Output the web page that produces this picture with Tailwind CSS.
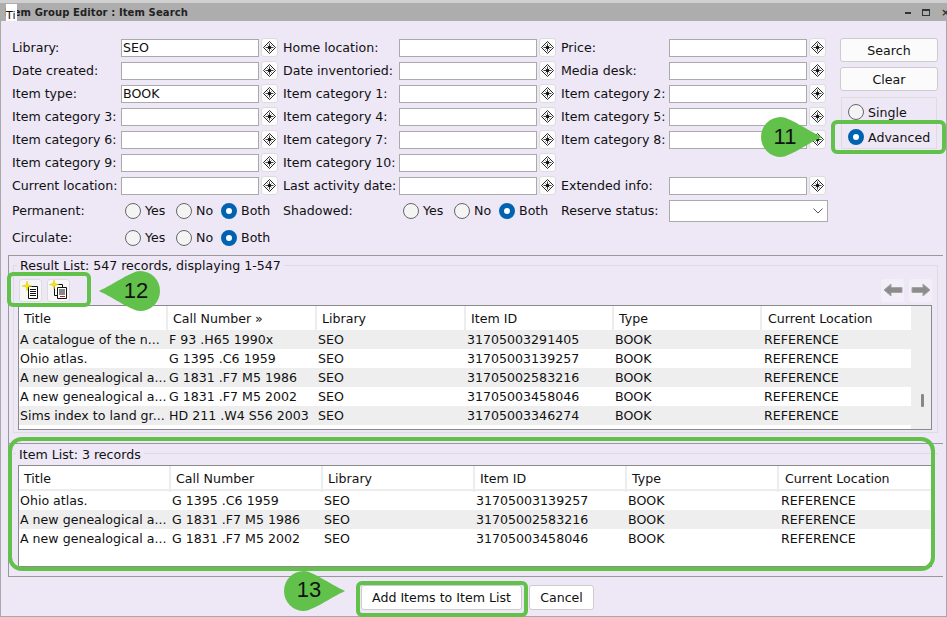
<!DOCTYPE html>
<html lang="en">
<head>
    <meta charset="UTF-8">
    <title>Item Group Editor : Item Search</title>
    <script src="https://cdn.jsdelivr.net/npm/@tailwindcss/browser@4"></script>
</head>
<body class="w-[947px] h-[617px] overflow-hidden relative bg-[#ede7f6] text-[12.6px] leading-[17px] whitespace-nowrap text-[#111] font-['DejaVu_Sans',sans-serif]">
    <svg class="hidden">
        <symbol id="diamond" viewBox="0 0 13 13">
            <path d="M6.5 .5L12.5 6.5L6.5 12.5L.5 6.5Z" fill="none" stroke="#111" stroke-width=".9"/>
            <path d="M6.5 2.5V10.5M2.5 6.5H10.5M4.5 4.5L8.5 8.5M8.5 4.5L4.5 8.5" stroke="#111" stroke-width=".8"/>
            <circle cx="6.5" cy="6.5" r="1.5" fill="#111"/>
        </symbol>
    </svg>

    <!-- Title bar -->
    <div class="h-[3px] bg-[#d0d0d0]"></div>
    <header class="h-[18px] bg-[#adadad] flex items-center justify-between pl-[5px] text-[10px] font-bold text-[#222]">
        <span class="tracking-[.1px]">Item Group Editor : Item Search</span>
        <div class="flex items-center gap-[11px]">
            <span class="w-[6px] h-[2px] bg-[#333] mt-[2px]"></span>
            <span class="w-[8px] h-[7px] border border-[#333] border-t-2"></span>
            <span class="w-[6px] overflow-hidden text-[#333] text-[11px] leading-none">×</span>
        </div>
    </header>
    <div class="absolute left-[6px] top-[4px] w-[11px] h-[17px] bg-white text-[11px] leading-[24px] overflow-hidden">Ti</div>

    <main class="h-[596px] border-x border-b border-[#a8a8a8] relative">
        <!-- Search form -->
        <section class="flex pt-[15px] pl-[11px]">
            <div>
                <div class="grid grid-cols-[109px_138px_24px_116px_138px_24px_108px_138px_18px] auto-rows-[23px] items-center">
                    <label>Library:</label><input value="SEO" class="h-[18px] w-full bg-white border border-[#aaa] px-[1px] outline-none"><button class="w-[17px] h-[19px] ml-[2px] bg-[#fbfbfb] border border-[#ddd] rounded-[3px] flex items-center justify-center"><svg class="w-[13px] h-[13px]"><use href="#diamond"></use></svg></button>
                    <label>Home location:</label><input class="h-[18px] w-full bg-white border border-[#aaa]"><button class="w-[17px] h-[19px] ml-[2px] bg-[#fbfbfb] border border-[#ddd] rounded-[3px] flex items-center justify-center"><svg class="w-[13px] h-[13px]"><use href="#diamond"></use></svg></button>
                    <label>Price:</label><input class="h-[18px] w-full bg-white border border-[#aaa]"><button class="w-[17px] h-[19px] ml-[2px] bg-[#fbfbfb] border border-[#ddd] rounded-[3px] flex items-center justify-center"><svg class="w-[13px] h-[13px]"><use href="#diamond"></use></svg></button>

                    <label>Date created:</label><input class="h-[18px] w-full bg-white border border-[#aaa]"><button class="w-[17px] h-[19px] ml-[2px] bg-[#fbfbfb] border border-[#ddd] rounded-[3px] flex items-center justify-center"><svg class="w-[13px] h-[13px]"><use href="#diamond"></use></svg></button>
                    <label>Date inventoried:</label><input class="h-[18px] w-full bg-white border border-[#aaa]"><button class="w-[17px] h-[19px] ml-[2px] bg-[#fbfbfb] border border-[#ddd] rounded-[3px] flex items-center justify-center"><svg class="w-[13px] h-[13px]"><use href="#diamond"></use></svg></button>
                    <label>Media desk:</label><input class="h-[18px] w-full bg-white border border-[#aaa]"><button class="w-[17px] h-[19px] ml-[2px] bg-[#fbfbfb] border border-[#ddd] rounded-[3px] flex items-center justify-center"><svg class="w-[13px] h-[13px]"><use href="#diamond"></use></svg></button>

                    <label>Item type:</label><input value="BOOK" class="h-[18px] w-full bg-white border border-[#aaa] px-[1px] outline-none"><button class="w-[17px] h-[19px] ml-[2px] bg-[#fbfbfb] border border-[#ddd] rounded-[3px] flex items-center justify-center"><svg class="w-[13px] h-[13px]"><use href="#diamond"></use></svg></button>
                    <label>Item category 1:</label><input class="h-[18px] w-full bg-white border border-[#aaa]"><button class="w-[17px] h-[19px] ml-[2px] bg-[#fbfbfb] border border-[#ddd] rounded-[3px] flex items-center justify-center"><svg class="w-[13px] h-[13px]"><use href="#diamond"></use></svg></button>
                    <label>Item category 2:</label><input class="h-[18px] w-full bg-white border border-[#aaa]"><button class="w-[17px] h-[19px] ml-[2px] bg-[#fbfbfb] border border-[#ddd] rounded-[3px] flex items-center justify-center"><svg class="w-[13px] h-[13px]"><use href="#diamond"></use></svg></button>

                    <label>Item category 3:</label><input class="h-[18px] w-full bg-white border border-[#aaa]"><button class="w-[17px] h-[19px] ml-[2px] bg-[#fbfbfb] border border-[#ddd] rounded-[3px] flex items-center justify-center"><svg class="w-[13px] h-[13px]"><use href="#diamond"></use></svg></button>
                    <label>Item category 4:</label><input class="h-[18px] w-full bg-white border border-[#aaa]"><button class="w-[17px] h-[19px] ml-[2px] bg-[#fbfbfb] border border-[#ddd] rounded-[3px] flex items-center justify-center"><svg class="w-[13px] h-[13px]"><use href="#diamond"></use></svg></button>
                    <label>Item category 5:</label><input class="h-[18px] w-full bg-white border border-[#aaa]"><button class="w-[17px] h-[19px] ml-[2px] bg-[#fbfbfb] border border-[#ddd] rounded-[3px] flex items-center justify-center"><svg class="w-[13px] h-[13px]"><use href="#diamond"></use></svg></button>

                    <label>Item category 6:</label><input class="h-[18px] w-full bg-white border border-[#aaa]"><button class="w-[17px] h-[19px] ml-[2px] bg-[#fbfbfb] border border-[#ddd] rounded-[3px] flex items-center justify-center"><svg class="w-[13px] h-[13px]"><use href="#diamond"></use></svg></button>
                    <label>Item category 7:</label><input class="h-[18px] w-full bg-white border border-[#aaa]"><button class="w-[17px] h-[19px] ml-[2px] bg-[#fbfbfb] border border-[#ddd] rounded-[3px] flex items-center justify-center"><svg class="w-[13px] h-[13px]"><use href="#diamond"></use></svg></button>
                    <label>Item category 8:</label><input class="h-[18px] w-full bg-white border border-[#aaa]"><button class="w-[17px] h-[19px] ml-[2px] bg-[#fbfbfb] border border-[#ddd] rounded-[3px] flex items-center justify-center"><svg class="w-[13px] h-[13px]"><use href="#diamond"></use></svg></button>

                    <label>Item category 9:</label><input class="h-[18px] w-full bg-white border border-[#aaa]"><button class="w-[17px] h-[19px] ml-[2px] bg-[#fbfbfb] border border-[#ddd] rounded-[3px] flex items-center justify-center"><svg class="w-[13px] h-[13px]"><use href="#diamond"></use></svg></button>
                    <label>Item category 10:</label><input class="h-[18px] w-full bg-white border border-[#aaa]"><button class="w-[17px] h-[19px] ml-[2px] bg-[#fbfbfb] border border-[#ddd] rounded-[3px] flex items-center justify-center"><svg class="w-[13px] h-[13px]"><use href="#diamond"></use></svg></button>
                    <span></span><span></span><span></span>

                    <label>Current location:</label><input class="h-[18px] w-full bg-white border border-[#aaa]"><button class="w-[17px] h-[19px] ml-[2px] bg-[#fbfbfb] border border-[#ddd] rounded-[3px] flex items-center justify-center"><svg class="w-[13px] h-[13px]"><use href="#diamond"></use></svg></button>
                    <label>Last activity date:</label><input class="h-[18px] w-full bg-white border border-[#aaa]"><button class="w-[17px] h-[19px] ml-[2px] bg-[#fbfbfb] border border-[#ddd] rounded-[3px] flex items-center justify-center"><svg class="w-[13px] h-[13px]"><use href="#diamond"></use></svg></button>
                    <label>Extended info:</label><input class="h-[18px] w-full bg-white border border-[#aaa]"><button class="w-[17px] h-[19px] ml-[2px] bg-[#fbfbfb] border border-[#ddd] rounded-[3px] flex items-center justify-center"><svg class="w-[13px] h-[13px]"><use href="#diamond"></use></svg></button>
                </div>

                <div class="flex items-center h-[27px]">
                    <span class="w-[113px]">Permanent:</span>
                    <span class="w-[51px] flex items-center gap-[4px]"><i class="w-4 h-4 rounded-full border border-[#666] bg-[#f4f4f4]"></i>Yes</span>
                    <span class="w-[45px] flex items-center gap-[4px]"><i class="w-4 h-4 rounded-full border border-[#666] bg-[#f4f4f4]"></i>No</span>
                    <span class="w-[62px] flex items-center gap-[4px]"><i class="w-4 h-4 rounded-full border-[5px] border-[#0063b1] bg-white"></i>Both</span>
                    <span class="w-[120px]">Shadowed:</span>
                    <span class="w-[51px] flex items-center gap-[4px]"><i class="w-4 h-4 rounded-full border border-[#666] bg-[#f4f4f4]"></i>Yes</span>
                    <span class="w-[45px] flex items-center gap-[4px]"><i class="w-4 h-4 rounded-full border border-[#666] bg-[#f4f4f4]"></i>No</span>
                    <span class="w-[62px] flex items-center gap-[4px]"><i class="w-4 h-4 rounded-full border-[5px] border-[#0063b1] bg-white"></i>Both</span>
                    <span class="w-[108px]">Reserve status:</span>
                    <div class="w-[159px] h-[22px] bg-white border border-[#aaa] flex items-center justify-end pr-[2px]">
                        <svg class="w-[14px] h-[14px] text-[#555]" viewBox="0 0 14 14" fill="none" stroke="currentColor"><path d="M2.5 4.5L7 9L11.5 4.5"/></svg>
                    </div>
                </div>
                <div class="flex items-center h-[27px]">
                    <span class="w-[113px]">Circulate:</span>
                    <span class="w-[51px] flex items-center gap-[4px]"><i class="w-4 h-4 rounded-full border border-[#666] bg-[#f4f4f4]"></i>Yes</span>
                    <span class="w-[45px] flex items-center gap-[4px]"><i class="w-4 h-4 rounded-full border border-[#666] bg-[#f4f4f4]"></i>No</span>
                    <span class="w-[62px] flex items-center gap-[4px]"><i class="w-4 h-4 rounded-full border-[5px] border-[#0063b1] bg-white"></i>Both</span>
                </div>
            </div>

            <!-- Search buttons and mode -->
            <aside class="w-[98px] ml-[12px] pt-[2px] flex flex-col">
                <button class="w-full h-[24px] bg-[#fbfbfb] border border-[#ccc] rounded-[3px]">Search</button>
                <button class="w-full h-[24px] mt-[5px] bg-[#fbfbfb] border border-[#ccc] rounded-[3px]">Clear</button>
                <div class="mt-[6px] h-[52px] mx-[1px] border border-[#ddd] pl-[6px] pt-[5px]">
                    <div class="flex items-center gap-[4px] h-[18px]"><i class="w-4 h-4 rounded-full border border-[#666] bg-[#f4f4f4]"></i>Single</div>
                    <div class="flex items-center gap-[4px] h-[18px] mt-[7px]"><i class="w-4 h-4 rounded-full border-[5px] border-[#0063b1] bg-white"></i>Advanced</div>
                </div>
            </aside>
        </section>

        <!-- Result list -->
        <section class="ml-[7px] mt-[4px] mr-[3px] h-[188px] border-t border-l border-[#999] pl-[4px] pr-[5px] pt-[9px]">
            <div class="border border-[#ddd] h-[168px] pl-[4px] pr-[5px] relative">
                <span class="absolute left-[3px] top-[-9px] bg-[#ede7f6] px-[3px]">Result List: 547 records, displaying 1-547</span>
                <div class="h-[39px] flex items-center justify-between pt-[9px]">
                    <div class="flex gap-[5px] pl-[1px]">
                        <button class="w-[23px] h-[23px] bg-[#f7f7f7] border border-[#ddd] rounded-[3px] flex items-center justify-center">
                            <svg class="w-[20px] h-[20px]" viewBox="0 0 20 20"><path d="M7.5 6.5H16.5V18.5H7.5Z" fill="#fff" stroke="#111"/><path d="M9 9.5H15M9 11.5H15M9 13.5H15M9 15.5H15" stroke="#111"/><path d="M6 1L7 5L11 6L7 7L6 11L5 7L1 6L5 5Z" fill="#f4e514" stroke="#d8c800" stroke-width=".5"/></svg>
                        </button>
                        <button class="w-[23px] h-[23px] bg-[#f7f7f7] border border-[#ddd] rounded-[3px] flex items-center justify-center">
                            <svg class="w-[20px] h-[20px]" viewBox="0 0 20 20"><path d="M5.5 4.5H13.5V15.5H5.5Z" fill="#fff" stroke="#111"/><path d="M8.5 7.5H17.5V18.5H8.5Z" fill="#fff" stroke="#111"/><path d="M10 10H16M10 12H16M10 14H16" stroke="#111"/><path d="M11 16.5H16" stroke="#c02020"/><path d="M5 0L6 3.5L9.5 4.5L6 5.5L5 9L4 5.5L.5 4.5L4 3.5Z" fill="#f4e514" stroke="#d8c800" stroke-width=".5"/></svg>
                        </button>
                    </div>
                    <div class="flex gap-[5px]">
                        <button class="w-[23px] h-[23px] bg-[#f3eff8] rounded-[3px] flex items-center justify-center">
                            <svg class="w-[20px] h-[14px]" viewBox="0 0 20 14"><path d="M1 7L8 1V4.5H19V9.5H8V13Z" fill="#8c8c8c" stroke="#a5a5a5"/></svg>
                        </button>
                        <button class="w-[23px] h-[23px] bg-[#f3eff8] rounded-[3px] flex items-center justify-center">
                            <svg class="w-[20px] h-[14px]" viewBox="0 0 20 14"><path d="M19 7L12 1V4.5H1V9.5H12V13Z" fill="#8c8c8c" stroke="#a5a5a5"/></svg>
                        </button>
                    </div>
                </div>
                <div class="h-[125px] border border-[#8a8a8a] flex bg-white overflow-hidden">
                    <div class="w-[892px]">
                        <div class="h-[24px] grid grid-cols-[149px_149px_149px_148px_148px_149px] items-center">
                            <span class="pl-[5px] border-r-2 border-[#ededed] h-full leading-[25px]">Title</span>
                            <span class="pl-[5px] border-r-2 border-[#ededed] h-full leading-[25px]">Call Number »</span>
                            <span class="pl-[5px] border-r-2 border-[#ededed] h-full leading-[25px]">Library</span>
                            <span class="pl-[5px] border-r-2 border-[#ededed] h-full leading-[25px]">Item ID</span>
                            <span class="pl-[5px] border-r-2 border-[#ededed] h-full leading-[25px]">Type</span>
                            <span class="pl-[6px] h-full leading-[25px]">Current Location</span>
                        </div>
                        <div class="h-[19px] leading-[19px] grid grid-cols-[149px_149px_149px_148px_148px_149px] bg-[#eee]"><span class="pl-[1px]">A catalogue of the n...</span><span class="pl-[1px]">F 93 .H65 1990x</span><span class="pl-[1px]">SEO</span><span class="pl-[1px]">31705003291405</span><span class="pl-[1px]">BOOK</span><span class="pl-[2px]">REFERENCE</span></div>
                        <div class="h-[19px] leading-[19px] grid grid-cols-[149px_149px_149px_148px_148px_149px]"><span class="pl-[1px]">Ohio atlas.</span><span class="pl-[1px]">G 1395 .C6 1959</span><span class="pl-[1px]">SEO</span><span class="pl-[1px]">31705003139257</span><span class="pl-[1px]">BOOK</span><span class="pl-[2px]">REFERENCE</span></div>
                        <div class="h-[19px] leading-[19px] grid grid-cols-[149px_149px_149px_148px_148px_149px] bg-[#eee]"><span class="pl-[1px]">A new genealogical a...</span><span class="pl-[1px]">G 1831 .F7 M5 1986</span><span class="pl-[1px]">SEO</span><span class="pl-[1px]">31705002583216</span><span class="pl-[1px]">BOOK</span><span class="pl-[2px]">REFERENCE</span></div>
                        <div class="h-[19px] leading-[19px] grid grid-cols-[149px_149px_149px_148px_148px_149px]"><span class="pl-[1px]">A new genealogical a...</span><span class="pl-[1px]">G 1831 .F7 M5 2002</span><span class="pl-[1px]">SEO</span><span class="pl-[1px]">31705003458046</span><span class="pl-[1px]">BOOK</span><span class="pl-[2px]">REFERENCE</span></div>
                        <div class="h-[19px] leading-[19px] grid grid-cols-[149px_149px_149px_148px_148px_149px] bg-[#eee]"><span class="pl-[1px]">Sims index to land gr...</span><span class="pl-[1px]">HD 211 .W4 S56 2003</span><span class="pl-[1px]">SEO</span><span class="pl-[1px]">31705003346274</span><span class="pl-[1px]">BOOK</span><span class="pl-[2px]">REFERENCE</span></div>
                    </div>
                    <div class="flex-1 relative bg-[#eee]">
                        <div class="absolute top-[88px] left-[10px] w-[3px] h-[13px] bg-[#888] rounded-[1px]"></div>
                    </div>
                </div>
            </div>
        </section>

        <!-- Item list -->
        <section class="ml-[7px] mr-[3px] h-[134px] border-t border-l border-b border-[#999] pl-[4px] pr-[5px] pt-[9px]">
            <div class="h-[114px] border-t border-[#ddd] pl-[5px] pr-[6px] pt-[11px] relative">
                <span class="absolute left-[3px] top-[-8px] bg-[#ede7f6] px-[3px]">Item List: 3 records</span>
                <div class="h-[102px] border border-[#8a8a8a] bg-white overflow-hidden">
                    <div class="h-[25px] grid grid-cols-[152px_152px_152px_152px_152px_152px] border-b-2 border-[#ededed]">
                        <span class="pl-[5px] border-r-2 border-[#ededed] leading-[26px]">Title</span>
                        <span class="pl-[5px] border-r-2 border-[#ededed] leading-[26px]">Call Number</span>
                        <span class="pl-[5px] border-r-2 border-[#ededed] leading-[26px]">Library</span>
                        <span class="pl-[5px] border-r-2 border-[#ededed] leading-[26px]">Item ID</span>
                        <span class="pl-[5px] border-r-2 border-[#ededed] leading-[26px]">Type</span>
                        <span class="pl-[6px] leading-[26px]">Current Location</span>
                    </div>
                    <div class="h-[19px] leading-[19px] grid grid-cols-[152px_152px_152px_152px_152px_152px]"><span class="pl-[1px]">Ohio atlas.</span><span class="pl-[1px]">G 1395 .C6 1959</span><span class="pl-[1px]">SEO</span><span class="pl-[1px]">31705003139257</span><span class="pl-[1px]">BOOK</span><span class="pl-[2px]">REFERENCE</span></div>
                    <div class="h-[19px] leading-[19px] grid grid-cols-[152px_152px_152px_152px_152px_152px] bg-[#eee]"><span class="pl-[1px]">A new genealogical a...</span><span class="pl-[1px]">G 1831 .F7 M5 1986</span><span class="pl-[1px]">SEO</span><span class="pl-[1px]">31705002583216</span><span class="pl-[1px]">BOOK</span><span class="pl-[2px]">REFERENCE</span></div>
                    <div class="h-[19px] leading-[19px] grid grid-cols-[152px_152px_152px_152px_152px_152px]"><span class="pl-[1px]">A new genealogical a...</span><span class="pl-[1px]">G 1831 .F7 M5 2002</span><span class="pl-[1px]">SEO</span><span class="pl-[1px]">31705003458046</span><span class="pl-[1px]">BOOK</span><span class="pl-[2px]">REFERENCE</span></div>
                </div>
            </div>
        </section>

        <!-- Footer buttons -->
        <footer class="flex justify-center gap-[7px] pt-[8px] pl-[8px]">
            <button class="w-[161px] h-[25px] bg-white border border-[#ccc] rounded-[3px]">Add Items to Item List</button>
            <button class="w-[65px] h-[25px] bg-white border border-[#ccc] rounded-[3px]">Cancel</button>
        </footer>
    </main>

    <!-- Tutorial callouts over the screenshot -->
    <div class="absolute left-[831px] top-[120px] w-[115px] h-[34px] border-[4px] border-[#62c14a] rounded-[6px]"></div>
    <div class="absolute left-[7px] top-[272px] w-[84px] h-[35px] border-[4px] border-[#62c14a] rounded-[6px]"></div>
    <div class="absolute left-[8px] top-[437px] w-[927px] h-[134px] border-[4px] border-[#62c14a] rounded-[14px]"></div>
    <div class="absolute left-[356px] top-[581px] w-[172px] h-[36px] border-[4px] border-[#62c14a] rounded-[6px]"></div>

    <svg class="absolute left-[761px] top-[117px]" width="62" height="40" viewBox="0 0 62 40"><path d="M20 0C28 0 46 13 61 20C46 27 28 40 20 40A20 20 0 0 1 20 0Z" fill="#62c14a"/></svg>
    <span class="absolute left-[765px] top-[117px] w-[40px] h-[40px] text-center leading-[40px] text-[22px] font-['Liberation_Sans',sans-serif]">11</span>
    <svg class="absolute left-[98px] top-[271px]" width="62" height="40" viewBox="0 0 62 40"><path d="M42 0C34 0 16 13 1 20C16 27 34 40 42 40A20 20 0 0 0 42 0Z" fill="#62c14a"/></svg>
    <span class="absolute left-[116px] top-[271px] w-[40px] h-[40px] text-center leading-[40px] text-[22px] font-['Liberation_Sans',sans-serif]">12</span>
    <svg class="absolute left-[284px] top-[571px]" width="62" height="40" viewBox="0 0 62 40"><path d="M20 0C28 0 46 13 61 20C46 27 28 40 20 40A20 20 0 0 1 20 0Z" fill="#62c14a"/></svg>
    <span class="absolute left-[289px] top-[570px] w-[40px] h-[40px] text-center leading-[40px] text-[22px] font-['Liberation_Sans',sans-serif]">13</span>
</body>
</html>
